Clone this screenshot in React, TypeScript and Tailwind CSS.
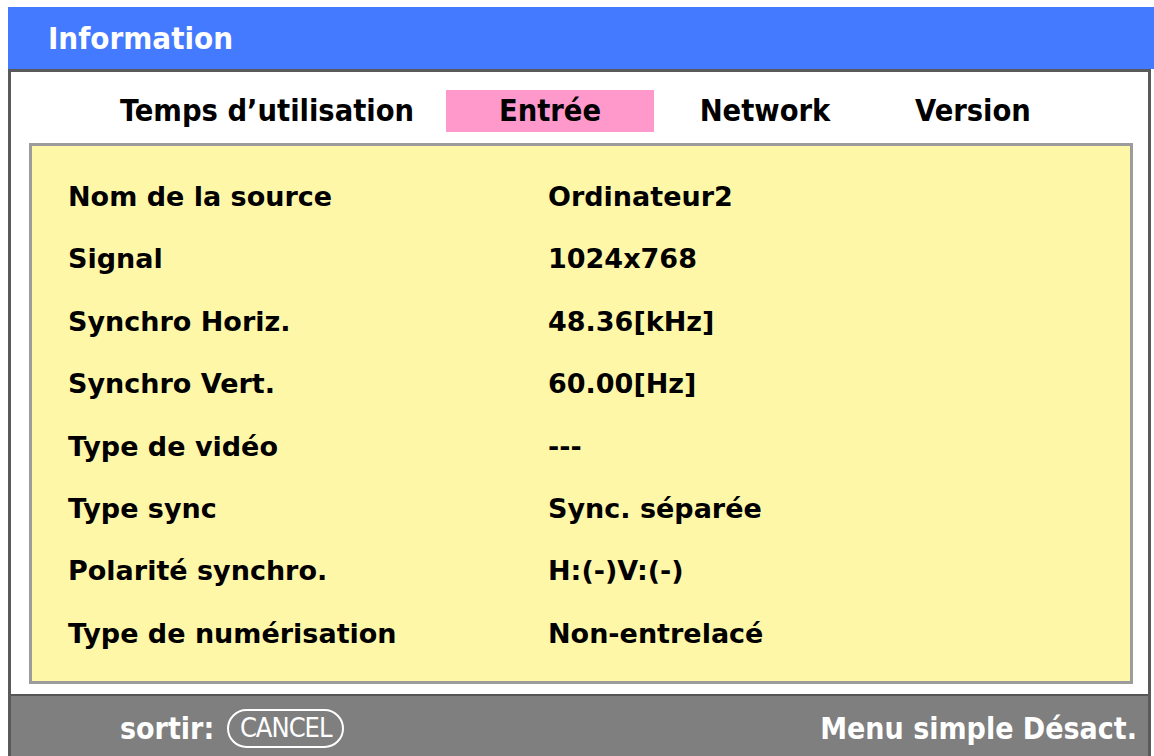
import React from "react"

const rows: [string, string][] = [
  ["Nom de la source", "Ordinateur2"],
  ["Signal", "1024x768"],
  ["Synchro Horiz.", "48.36[kHz]"],
  ["Synchro Vert.", "60.00[Hz]"],
  ["Type de vidéo", "---"],
  ["Type sync", "Sync. séparée"],
  ["Polarité synchro.", "H:(-)V:(-)"],
  ["Type de numérisation", "Non-entrelacé"],
]

const cond = "font-['DejaVu_Sans_Condensed','DejaVu_Sans',sans-serif] font-bold"
const wide = "font-['DejaVu_Sans','Liberation_Sans',sans-serif] font-bold"

export default function App() {
  return (
    <div className="w-[1154px] h-[756px] bg-white pl-[8px] pt-[7px] overflow-hidden">
      <div className={`h-[62px] bg-[#437aff] flex items-center pl-[40px] text-white text-[31px] ${cond}`}>
        Information
      </div>

      <div className="mr-[3px] border-x-[3px] border-t-[3px] border-[#5a5a5a] bg-white flex flex-col">
        <div className={`pt-[18px] pl-[109px] flex items-stretch h-[60px] text-black text-[30.5px] ${cond}`}>
          <div className="w-[326px] flex items-center">Temps d’utilisation</div>
          <div className="w-[208px] h-[42px] bg-[#ff99cc] flex items-center justify-center">Entrée</div>
          <div className="w-[222px] h-[42px] flex items-center justify-center">Network</div>
          <div className="w-[194px] h-[42px] flex items-center justify-center">Version</div>
        </div>

        <div className="mt-[11px] ml-[18px] mr-[15px] h-[541px] border-[3px] border-[#9c9c9c] bg-[#fff7a8] pt-[20px] pl-[36px]">
          {rows.map(([label, value]) => (
            <div key={label} className={`h-[62.4px] grid grid-cols-[480px_1fr] items-center text-black text-[27px] ${wide}`}>
              <span>{label}</span>
              <span>{value}</span>
            </div>
          ))}
        </div>

        <div className="h-[10px]" />

        <div className={`h-[62px] border-t-2 border-[#555] bg-[#7f7f7f] flex items-center justify-between pt-[4px] pl-[109px] pr-[11px] text-white text-[30px] ${cond}`}>
          <div className="flex items-center gap-[13px]">
            <span>sortir:</span>
            <span className="w-[117px] h-[39px] rounded-full border-[2px] border-white flex items-center justify-center font-['DejaVu_Sans_Condensed',sans-serif] font-normal text-[27px] tracking-[-1px]">
              CANCEL
            </span>
          </div>
          <span>Menu simple Désact.</span>
        </div>
      </div>
    </div>
  )
}
